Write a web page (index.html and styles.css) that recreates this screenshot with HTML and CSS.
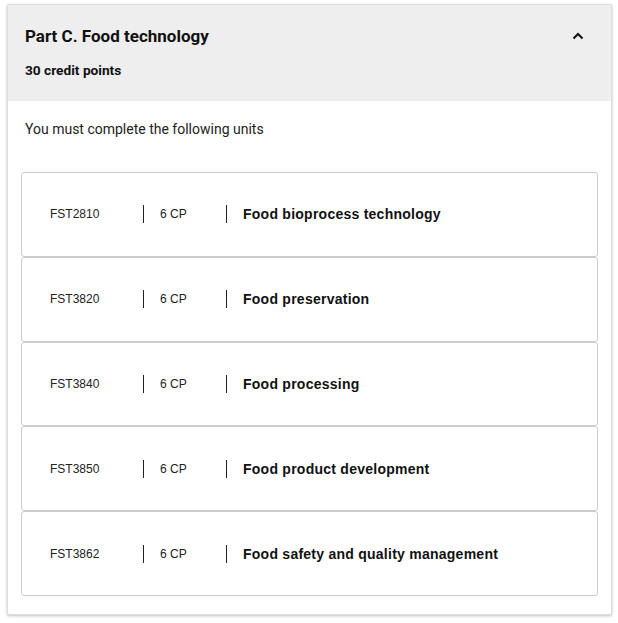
FILE: index.html
```html
<!DOCTYPE html>
<html lang="en">
<head>
  <meta charset="UTF-8">
  <title>Part C. Food technology</title>
  <link rel="stylesheet" href="styles.css">
</head>
<body>

  <div class="part">
    <div class="part-head">
      <div class="part-title-row">
        <h2 class="part-title">Part C. Food technology</h2>
        <svg class="chevron" width="12" height="8" viewBox="0 0 12 8">
          <path d="M1.5 6.5 L6 2 L10.5 6.5" fill="none" stroke="#111" stroke-width="2"/>
        </svg>
      </div>
      <div class="part-cp">30 credit points</div>
    </div>

    <div class="part-body">
      <p class="intro">You must complete the following units</p>

      <div class="units">
        <div class="unit">
          <span class="code">FST2810</span>
          <span class="cp">6 CP</span>
          <span class="name">Food bioprocess technology</span>
        </div>
        <div class="unit">
          <span class="code">FST3820</span>
          <span class="cp">6 CP</span>
          <span class="name">Food preservation</span>
        </div>
        <div class="unit">
          <span class="code">FST3840</span>
          <span class="cp">6 CP</span>
          <span class="name">Food processing</span>
        </div>
        <div class="unit">
          <span class="code">FST3850</span>
          <span class="cp">6 CP</span>
          <span class="name">Food product development</span>
        </div>
        <div class="unit">
          <span class="code">FST3862</span>
          <span class="cp">6 CP</span>
          <span class="name">Food safety and quality management</span>
        </div>
      </div>
    </div>
  </div>

</body>
</html>
```

FILE: styles.css
```css
* { box-sizing: border-box; margin: 0; padding: 0; }
body {
  font-family: Roboto, "Liberation Sans", sans-serif;
  background: #fff;
  color: #222;
}
.part {
  margin: 4px 6px 8px 7px;
  background: #fff;
  border: 1px solid #ddd;
  border-radius: 2px;
  box-shadow: 0 1px 3px rgba(0,0,0,.25);
}
.part-head {
  background: #eee;
  padding: 20px 17px 22px;
}
.part-title-row {
  display: flex;
  align-items: center;
  justify-content: space-between;
}
.part-title {
  font-size: 17px;
  line-height: 22px;
  font-weight: 700;
  color: #111;
}
.chevron {
  margin-right: 10px;
}
.part-cp {
  margin-top: 14px;
  font-size: 13.7px;
  line-height: 18px;
  font-weight: 700;
  color: #111;
}
.part-body {
  padding: 18px 13px 18px;
}
.intro {
  padding-left: 4px;
  font-size: 14px;
  line-height: 20px;
  color: #222;
  margin-bottom: 33px;
}
.unit {
  display: flex;
  align-items: center;
  height: 84.8px;
  border: 1px solid #ccc;
  border-radius: 3px;
  padding-left: 28px;
  font-family: "Liberation Sans", Arial, sans-serif;
}
.unit .code {
  width: 93px;
  font-size: 12px;
  color: #222;
}
.unit .cp {
  width: 83px;
  font-size: 12px;
  color: #222;
  border-left: 1px solid #222;
  padding-left: 16px;
  line-height: 18px;
}
.unit .name {
  border-left: 1px solid #222;
  padding-left: 16px;
  line-height: 18px;
  font-size: 14px;
  font-weight: 700;
  color: #111;
  letter-spacing: .25px;
}
```
